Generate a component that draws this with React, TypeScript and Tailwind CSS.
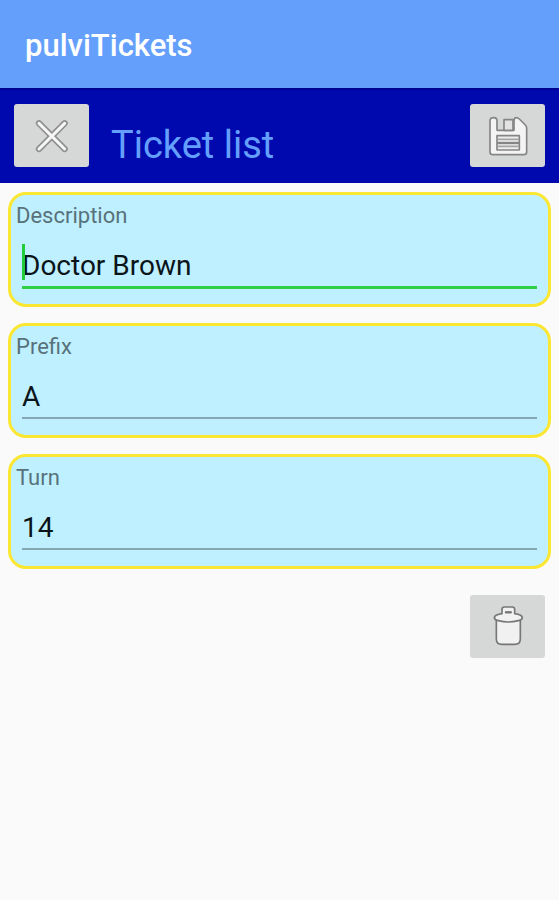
import { useState } from "react";
import type { ReactNode } from "react";

interface FieldProps {
  id: string;
  label: string;
  value: string;
  active?: boolean;
  onChange: (value: string) => void;
}

function CloseIcon() {
  return (
    <svg className="w-10 h-10" viewBox="96 107 120 120" fill="none" strokeLinecap="round">
      <path d="M117 129 L194 206 M194 129 L117 206" stroke="#8f8f8f" strokeWidth="19" />
      <path d="M117 129 L194 206 M194 129 L117 206" stroke="#f6f6f6" strokeWidth="9" />
    </svg>
  );
}

function SaveIcon() {
  return (
    <svg className="w-10 h-10" viewBox="144 107 120 120" fill="#f4f4f4" stroke="#858585" strokeWidth="5" strokeLinejoin="round">
      <path d="M161 112 Q171 112 171 121 V150 H222 V121 Q222 112 229 112 Q234 112 238 116 L256 134 Q260 138 260 143 V214 Q260 223 251 223 H159 Q150 223 150 214 V121 Q150 112 161 112 Z" />
      <path d="M192 118 H219 V150 H192 Z" fill="#e2e3e2" />
      <rect x="171" y="166" width="67" height="43" fill="#ececec" />
      <path d="M172 177 H237 M172 198 H237" stroke="#a5a5a5" />
      <path d="M172 188 H237" strokeWidth="7" />
    </svg>
  );
}

function TrashIcon() {
  return (
    <svg className="w-11 h-11" viewBox="139 131 132 132" fill="#f1f1f1" stroke="#777777" strokeWidth="5" strokeLinejoin="round">
      <path d="M170 176 V232 Q170 249 187 249 H225 Q242 249 242 232 V176 Z" />
      <path d="M187 157 V144 Q187 137 194 137 H218 Q225 137 225 144 V157 Q247 160 248 169 Q247 177 236 178 Q206 186 176 178 Q165 177 164 169 Q165 160 187 157 Z" />
      <path d="M197 151 H215 V155 H197 Z" fill="#777777" strokeWidth="3" />
    </svg>
  );
}

function IconButton({ label, children }: { label: string; children: ReactNode }) {
  return (
    <button
      type="button"
      aria-label={label}
      className="w-[75px] h-[63px] shrink-0 rounded-[3px] bg-[#d6d8d7] flex items-center justify-center"
    >
      {children}
    </button>
  );
}

function Field({ id, label, value, active, onChange }: FieldProps) {
  return (
    <div className="rounded-[18px] border-3 border-[#fbe732] bg-[#bff0ff] px-[5px] pt-[7px] pb-[15px]">
      <label htmlFor={id} className="block text-[22px] leading-7 text-[#58727b]">
        {label}
      </label>
      <div className="relative mx-1.5 mt-2.5 h-[49px]">
        {active && <span className="absolute left-0 top-1 h-9 w-[3px] bg-[#22cc3a]" />}
        <input
          id={id}
          type="text"
          value={value}
          onChange={(e) => onChange(e.target.value)}
          className={
            active
              ? "block w-full h-[49px] border-b-3 border-[#2fce45] pt-1 text-[28px] text-[#0b1418] outline-none"
              : "block w-full h-12 border-b-2 border-[#86a8b3] pt-1 text-[28px] text-[#0b1418] outline-none"
          }
        />
      </div>
    </div>
  );
}

function App() {
  const [description, setDescription] = useState("Doctor Brown");
  const [prefix, setPrefix] = useState("A");
  const [turn, setTurn] = useState("14");

  return (
    <div className="min-h-screen bg-[#fafafa] font-['Roboto',sans-serif]">
      <header className="flex h-[88px] items-center bg-[#649ffc] px-[25px] pt-1">
        <h1 className="text-[31px] font-medium text-white">pulviTickets</h1>
      </header>

      {/* Toolbar */}
      <div className="flex items-start border-t-2 border-[#000391] bg-[#0009ad] px-3.5 pt-3.5 pb-4">
        <IconButton label="Close">
          <CloseIcon />
        </IconButton>
        <h2 className="grow pl-[22px] pt-5 text-[38px] leading-[43px] text-[#649ffc]">Ticket list</h2>
        <IconButton label="Save">
          <SaveIcon />
        </IconButton>
      </div>

      {/* Ticket form */}
      <form className="flex flex-col gap-4 px-2 pt-[9px]">
        <Field id="description" label="Description" value={description} onChange={setDescription} active />
        <Field id="prefix" label="Prefix" value={prefix} onChange={setPrefix} />
        <Field id="turn" label="Turn" value={turn} onChange={setTurn} />
      </form>

      <div className="flex justify-end px-3.5 pt-[26px]">
        <IconButton label="Delete">
          <TrashIcon />
        </IconButton>
      </div>
    </div>
  );
}

export default App;
